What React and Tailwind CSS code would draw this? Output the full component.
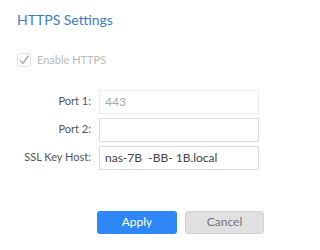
import React from "react";

const App = () => {
  return (
    <div className="w-[279px] h-[250px] bg-white font-['Lato',sans-serif] text-[11px] text-[#555]">
      <div className="pt-[11px] pl-[17px]">
        <h1 className="text-[14px] leading-[18px] text-[#3b7ec8]">HTTPS Settings</h1>

        <label className="mt-[23px] flex items-center gap-[6px] text-[#bbb]">
          <span className="w-[14px] h-[14px] border border-[#e2e2e2] rounded-[2px] flex items-center justify-center">
            <svg width="12" height="12" viewBox="0 0 12 12" fill="none">
              <path d="M2 6.5 L4.8 9.5 L10.5 1.5" stroke="#aaa" strokeWidth="1.4" />
            </svg>
          </span>
          Enable HTTPS
        </label>

        <div className="mt-[21px] grid grid-cols-[74px_160px] gap-x-2 gap-y-[4px] items-center">
          <span className="text-right">Port 1:</span>
          <div className="h-[24px] border border-[#ececec] px-[5px] flex items-center text-[12px] text-[#aaa]">443</div>

          <span className="text-right">Port 2:</span>
          <div className="h-[24px] border border-[#dcdcdc]"></div>

          <span className="text-right whitespace-nowrap">SSL Key Host:</span>
          <div className="h-[24px] border border-[#dcdcdc] px-[5px] flex items-center text-[12px] text-[#444] whitespace-pre">nas-7B  -BB- 1B.local</div>
        </div>

        <div className="mt-[41px] ml-[80px] flex gap-2 text-[12px]">
          <button className="w-[80px] h-[23px] rounded-[3px] bg-[#2f87f7] text-white">Apply</button>
          <button className="w-[79px] h-[23px] rounded-[3px] bg-[#e0e0e0] border border-[#d2d2d2] text-[#777]">Cancel</button>
        </div>
      </div>
    </div>
  );
};

export default App;
